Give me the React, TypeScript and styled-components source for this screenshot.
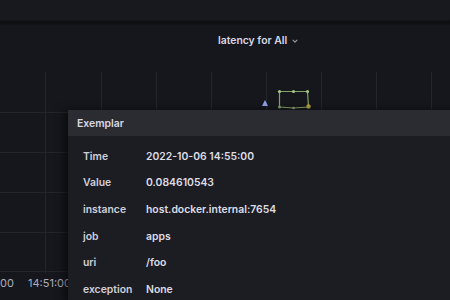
import React from 'react';
import styled, { createGlobalStyle } from 'styled-components';

const GlobalStyle = createGlobalStyle`
  html, body {
    margin: 0;
    padding: 0;
    background: #15161b;
    overflow: hidden;
  }
  body {
    font-family: Inter, "Noto Sans", sans-serif;
    color: #ccccdc;
  }
`;

const Page = styled.div`
  display: flex;
  flex-direction: column;
  width: 450px;
  height: 300px;
  overflow: hidden;
  background: #15161c;
`;

const TopBar = styled.div`
  height: 20px;
  background: #18191e;
`;

const TopShadow = styled.div`
  height: 5px;
  background: linear-gradient(#121317, #0e0f12 50%, #131419);
`;

const Panel = styled.div`
  position: relative;
  flex: 1;
  display: flex;
  flex-direction: column;
  background: #16171d;
`;

const PanelHeader = styled.div`
  display: flex;
  align-items: center;
  height: 30px;
  padding-left: 218px;
  gap: 4px;
  font-size: 10.4px;
  font-weight: 600;
  color: #d6d6e0;
`;

const Chevron = styled.svg`
  width: 8px;
  height: 8px;
  margin-top: 2px;
  color: #9a9aa8;
`;

const Chart = styled.div`
  position: relative;
  flex: 1;
`;

const Grid = styled.svg`
  display: block;
  width: 100%;
  height: 100%;
`;

const Tooltip = styled.div`
  position: absolute;
  left: 68px;
  top: 55px;
  width: 420px;
  background: #1c1d22;
  box-shadow: -4px 0 8px rgba(0, 0, 0, 0.55);
  border-radius: 2px;
`;

const TooltipHeader = styled.div`
  display: flex;
  align-items: center;
  height: 26px;
  padding-left: 9px;
  background: #2b2c32;
  font-size: 10.4px;
  font-weight: 600;
  color: #d8d8e2;
`;

const Rows = styled.div`
  display: flex;
  flex-direction: column;
  padding: 7px 0 0 15px;
`;

const Row = styled.div`
  display: grid;
  grid-template-columns: 63px 1fr;
  align-items: center;
  height: 26.6px;
  font-size: 10.4px;
  font-weight: 600;
`;

const Label = styled.span`
  color: #cfcfd9;
`;

const Value = styled.span`
  color: #dcdce4;
`;

const rows: [string, string][] = [
  ['Time', '2022-10-06 14:55:00'],
  ['Value', '0.084610543'],
  ['instance', 'host.docker.internal:7654'],
  ['job', 'apps'],
  ['uri', '/foo'],
  ['exception', 'None'],
];

const vLines = [45, 101, 156, 211, 266, 321, 376, 431];
const hLines = [57, 97, 137, 177, 216];

export default function App() {
  return (
    <>
      <GlobalStyle />
      <Page>
        <TopBar />
        <TopShadow />
        <Panel>
          <PanelHeader>
            latency for All
            <Chevron viewBox="0 0 10 10" fill="none" stroke="currentColor" strokeWidth="1.4">
              <path d="M2.5 4 L5 6.5 L7.5 4" strokeLinecap="round" strokeLinejoin="round" />
            </Chevron>
          </PanelHeader>
          <Chart>
            <Grid viewBox="0 0 450 245">
              {vLines.map((x) => (
                <line key={x} x1={x + 0.5} y1={17} x2={x + 0.5} y2={218} stroke="#25262c" strokeWidth="1" />
              ))}
              {hLines.map((y) => (
                <line key={y} x1={0} y1={y + 0.5} x2={450} y2={y + 0.5} stroke="#24252b" strokeWidth="1" />
              ))}
              <polygon points="262,51 268,51 265,45" fill="#8ea6e8" />
              <polyline
                points="279.5,52 279.5,36.5 293.5,36.5 307.5,36.5 308.5,52 293.5,53 279.5,52"
                fill="none"
                stroke="#86a266"
                strokeWidth="1.2"
              />
              <circle cx="279.5" cy="36.5" r="1.6" fill="#a3c585" />
              <circle cx="293.5" cy="36.5" r="1.6" fill="#a3c585" />
              <circle cx="307.5" cy="36.5" r="1.6" fill="#a3c585" />
              <circle cx="279.5" cy="52" r="1.5" fill="#8aa46c" />
              <circle cx="293.5" cy="53" r="1.3" fill="#8aa46c" />
              <circle cx="308.5" cy="51.5" r="2.2" fill="#b3a43c" />
              <text x="0" y="232" fill="#aeaeba" fontSize="11" fontFamily="Inter, sans-serif">
                00
              </text>
              <text x="28" y="232" fill="#aeaeba" fontSize="11" fontFamily="Inter, sans-serif">
                14:51:00
              </text>
            </Grid>
            <Tooltip>
              <TooltipHeader>Exemplar</TooltipHeader>
              <Rows>
                {rows.map(([k, v]) => (
                  <Row key={k}>
                    <Label>{k}</Label>
                    <Value>{v}</Value>
                  </Row>
                ))}
              </Rows>
            </Tooltip>
          </Chart>
        </Panel>
      </Page>
    </>
  );
}
